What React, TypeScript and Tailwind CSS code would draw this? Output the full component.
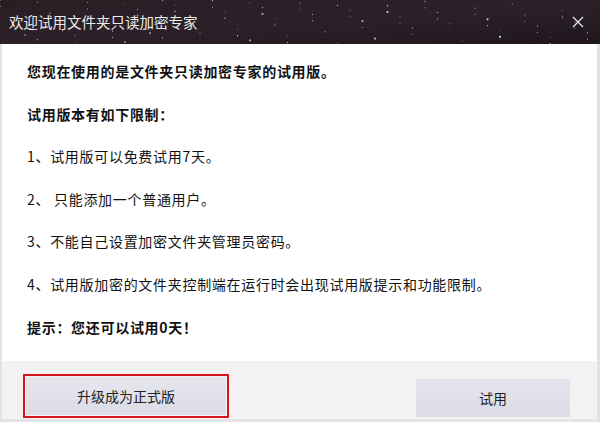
import { FC } from "react";

const stars = Array.from({ length: 90 }, (_, i) => {
  const x = (i * 137.5) % 600;
  const y = (i * 53.3) % 44;
  const r = i % 7 === 0 ? 1.1 : 0.6;
  const o = 0.25 + ((i * 31) % 60) / 100;
  return { x, y, r, o };
});

const TitleBar: FC = () => (
  <div className="relative h-[44px] bg-[#251c22] flex items-center justify-between overflow-hidden">
    <svg className="absolute inset-0" width="600" height="44">
      <defs>
        <linearGradient id="sky" x1="0" x2="1" y1="0" y2="1">
          <stop offset="0" stopColor="#2a1e25" />
          <stop offset="0.5" stopColor="#2c2128" />
          <stop offset="1" stopColor="#1f171d" />
        </linearGradient>
      </defs>
      <rect width="600" height="44" fill="url(#sky)" />
      {stars.map((s, i) => (
        <circle key={i} cx={s.x} cy={s.y} r={s.r} fill="#ffffff" opacity={s.o} />
      ))}
    </svg>
    <span className="relative pl-[9px] text-[14.5px] text-[#ececec]">
      欢迎试用文件夹只读加密专家
    </span>
    <svg className="relative mr-[16px]" width="12" height="12" viewBox="0 0 12 12">
      <path d="M1 1 L11 11 M11 1 L1 11" stroke="#e8e8e8" strokeWidth="1.3" />
    </svg>
  </div>
);

const lines: { text: string; bold?: boolean }[] = [
  { text: "您现在使用的是文件夹只读加密专家的试用版。", bold: true },
  { text: "试用版本有如下限制：", bold: true },
  { text: "1、试用版可以免费试用7天。" },
  { text: "2、 只能添加一个普通用户。" },
  { text: "3、不能自己设置加密文件夹管理员密码。" },
  { text: "4、试用版加密的文件夹控制端在运行时会出现试用版提示和功能限制。" },
  { text: "提示：您还可以试用0天！", bold: true },
];

export default function App() {
  return (
    <div
      className="w-[600px] h-[422px] flex flex-col bg-white overflow-hidden"
      style={{ fontFamily: '"Microsoft YaHei", "Noto Sans CJK SC", sans-serif' }}
    >
      <TitleBar />
      <div className="flex-1 flex flex-col border-x-2 border-[#e2e2e2] border-r-[3px]">
        <div className="flex-1 flex flex-col pl-[25px] pt-[17px] gap-[21.6px] text-[14px] leading-[21px] tracking-[0.7px] text-[#111]">
          {lines.map((l) => (
            <div key={l.text} className={l.bold ? "font-bold" : ""}>
              {l.text}
            </div>
          ))}
        </div>
        <div className="h-[61px] bg-[#f2f2f2] flex items-start justify-between pl-[21px] pr-[27px] pt-[13px] border-b-[3px] border-[#e4e4e4]">
          <div className="border-2 border-[#d8131b] p-[1px]">
            <button className="w-[200px] h-[38px] bg-gradient-to-b from-[#e6e6ee] to-[#dcdce8] text-[14px] text-[#222]">
              升级成为正式版
            </button>
          </div>
          <button className="mt-[5px] w-[154px] h-[38px] bg-gradient-to-b from-[#e4e4ec] to-[#dcdce6] text-[14px] text-[#222]">
            试用
          </button>
        </div>
      </div>
    </div>
  );
}
